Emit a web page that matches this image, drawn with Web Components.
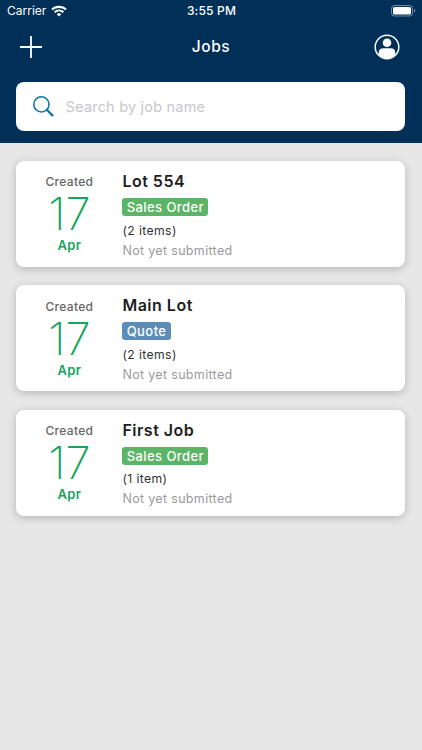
<!DOCTYPE html>
<html lang="en">
<head>
<meta charset="utf-8">
<meta name="viewport" content="width=device-width, initial-scale=1">
<title>Jobs</title>
<style>
  body {
    margin: 0;
    min-height: 100vh;
    background: #e7e7e7;
    font-family: Inter, "Open Sans", sans-serif;
  }
</style>
</head>
<body>
<jobs-app>
  <status-bar slot="header"></status-bar>
  <nav-bar slot="header">Jobs</nav-bar>
  <search-field slot="header" placeholder="Search by job name"></search-field>
  <job-card day="17" month="Apr" kind="order">
    Lot 554
    <span slot="badge">Sales Order</span>
    <span slot="items">(2 items)</span>
    <span slot="status">Not yet submitted</span>
  </job-card>
  <job-card day="17" month="Apr" kind="quote">
    Main Lot
    <span slot="badge">Quote</span>
    <span slot="items">(2 items)</span>
    <span slot="status">Not yet submitted</span>
  </job-card>
  <job-card day="17" month="Apr" kind="order">
    First Job
    <span slot="badge">Sales Order</span>
    <span slot="items">(1 item)</span>
    <span slot="status">Not yet submitted</span>
  </job-card>
</jobs-app>

<script>
class JobsApp extends HTMLElement {
  connectedCallback() {
    this.attachShadow({ mode: 'open' });
    this.shadowRoot.innerHTML = `
      <style>
        :host {
          display: block;
        }
        header {
          height: 143px;
          background: #003057;
          color: white;
        }
        main {
          display: flex;
          flex-direction: column;
          gap: 18.2px;
          padding: 18.2px 16.6px 18px 16.4px;
        }
      </style>
      <header><slot name="header"></slot></header>
      <main><slot></slot></main>
    `;
  }
}
customElements.define('jobs-app', JobsApp);

class StatusBar extends HTMLElement {
  connectedCallback() {
    this.attachShadow({ mode: 'open' });
    this.shadowRoot.innerHTML = `
      <style>
        :host {
          display: grid;
          grid-template-columns: 1fr auto 1fr;
          align-items: center;
          height: 22px;
          padding: 0 6px 0 7px;
          font-size: 12px;
          line-height: 22px;
        }
        .carrier {
          display: flex;
          align-items: center;
          gap: 5px;
        }
        .time {
          font-weight: 500;
          letter-spacing: 0.2px;
        }
        .battery {
          justify-self: end;
        }
        svg {
          display: block;
        }
      </style>
      <div class="carrier">
        <span>Carrier</span>
        <svg width="16" height="12" viewBox="0 0 16 12" fill="none" stroke="currentColor" stroke-width="2.1">
          <path d="M1 4.6C4.8 .9 11.2 .9 15 4.6"/>
          <path d="M3.6 7.2C6.1 4.9 9.9 4.9 12.4 7.2"/>
          <path d="M8 11.5L5.7 9.2C7 8 9 8 10.3 9.2Z" fill="currentColor" stroke="none"/>
        </svg>
      </div>
      <div class="time">3:55 PM</div>
      <svg class="battery" width="25" height="12" viewBox="0 0 25 12">
        <rect x=".5" y=".5" width="21" height="10.5" rx="3" fill="none" stroke="#fff" stroke-opacity=".45"/>
        <rect x="2" y="2" width="18" height="7.5" rx="1.6" fill="#fff"/>
        <path d="M23 4v3.6c.8-.3 1.2-1 1.2-1.8S23.8 4.3 23 4z" fill="#fff" fill-opacity=".5"/>
      </svg>
    `;
  }
}
customElements.define('status-bar', StatusBar);

class NavBar extends HTMLElement {
  connectedCallback() {
    this.attachShadow({ mode: 'open' });
    this.shadowRoot.innerHTML = `
      <style>
        :host {
          display: grid;
          grid-template-columns: 1fr auto 1fr;
          align-items: center;
          height: 50px;
          padding: 0 22px 0 20px;
        }
        h1 {
          margin: 0 0 0 2px;
          font-size: 15.5px;
          font-weight: 500;
          line-height: 20px;
          letter-spacing: 0.6px;
        }
        svg {
          display: block;
        }
        .profile {
          justify-self: end;
        }
      </style>
      <svg width="22" height="22" viewBox="0 0 22 22" stroke="currentColor" stroke-width="1.8">
        <path d="M0 11H22M11 0V22"/>
      </svg>
      <h1><slot></slot></h1>
      <svg class="profile" width="26" height="26" viewBox="0 0 26 26">
        <circle cx="13" cy="13" r="11.8" fill="none" stroke="currentColor" stroke-width="1.5"/>
        <circle cx="13" cy="8.7" r="4.3" fill="currentColor"/>
        <path d="M4.7 20.8V18.5C4.7 15.6 6.6 14.2 9.4 14.2H16.6C19.4 14.2 21.3 15.6 21.3 18.5V20.8C19.2 23.3 16.4 24.5 13 24.5S6.8 23.3 4.7 20.8Z" fill="currentColor"/>
      </svg>
    `;
  }
}
customElements.define('nav-bar', NavBar);

class SearchField extends HTMLElement {
  connectedCallback() {
    this.attachShadow({ mode: 'open' });
    this.shadowRoot.innerHTML = `
      <style>
        :host {
          display: block;
          padding: 10px 16.6px 0 16.4px;
        }
        label {
          display: flex;
          align-items: center;
          gap: 11.6px;
          height: 48.5px;
          padding: 0 16px 0 16.6px;
          background: white;
          border-radius: 8px;
        }
        input {
          flex: 1;
          min-width: 0;
          padding: 1px 0 0;
          border: 0;
          outline: none;
          background: none;
          font: 14.5px/20px Inter, "Open Sans", sans-serif;
          letter-spacing: 0.2px;
          color: #222;
        }
        input::placeholder {
          color: #c7c7cb;
          opacity: 1;
        }
      </style>
      <label>
        <svg width="21" height="21" viewBox="0 0 21 21" fill="none" stroke="#0e76a8">
          <circle cx="8.4" cy="8.4" r="7.6" stroke-width="1.6"/>
          <path d="M13.8 13.8L19.4 19.4" stroke-width="2.3" stroke-linecap="round"/>
        </svg>
        <input type="text" placeholder="${this.getAttribute('placeholder')}">
      </label>
    `;
  }
}
customElements.define('search-field', SearchField);

class JobCard extends HTMLElement {
  connectedCallback() {
    this.attachShadow({ mode: 'open' });
    this.shadowRoot.innerHTML = `
      <style>
        :host {
          display: flex;
          box-sizing: border-box;
          height: 106px;
          background: white;
          border-radius: 8px;
          box-shadow: 0 2px 8px rgba(0, 0, 0, 0.22);
          --badge: #5cb466;
        }
        :host([kind="quote"]) {
          --badge: #5b8db8;
        }
        .date {
          display: flex;
          flex-direction: column;
          align-items: center;
          width: 106px;
          padding-top: 11.2px;
          color: #15a45c;
        }
        .label {
          font-size: 12px;
          font-weight: 500;
          line-height: 20px;
          letter-spacing: 0.3px;
          color: #666;
        }
        .day {
          font-size: 45.5px;
          font-weight: 200;
          line-height: 44px;
        }
        .month {
          font-size: 13px;
          font-weight: 600;
          line-height: 19px;
          letter-spacing: 0.3px;
        }
        .info {
          display: flex;
          flex-direction: column;
          align-items: flex-start;
        }
        h2 {
          margin: 9px 0 0;
          font-size: 16px;
          font-weight: 600;
          line-height: 22px;
          letter-spacing: 0.5px;
          color: #1e1e1e;
        }
        .badge {
          height: 18px;
          margin-top: 6px;
          padding: 0 4.3px;
          border-radius: 3px;
          background: var(--badge);
          color: white;
          font-size: 13px;
          font-weight: 500;
          line-height: 18px;
          letter-spacing: 0.43px;
        }
        .items {
          margin-top: 4.4px;
          font-size: 12.2px;
          line-height: 20px;
          letter-spacing: 0.4px;
          color: #333;
        }
        .status {
          font-size: 12.5px;
          line-height: 20.4px;
          letter-spacing: 0.33px;
          color: #9b9b9b;
        }
      </style>
      <div class="date">
        <span class="label">Created</span>
        <span class="day">${this.getAttribute('day')}</span>
        <span class="month">${this.getAttribute('month')}</span>
      </div>
      <div class="info">
        <h2><slot></slot></h2>
        <div class="badge"><slot name="badge"></slot></div>
        <div class="items"><slot name="items"></slot></div>
        <div class="status"><slot name="status"></slot></div>
      </div>
    `;
  }
}
customElements.define('job-card', JobCard);
</script>
</body>
</html>
